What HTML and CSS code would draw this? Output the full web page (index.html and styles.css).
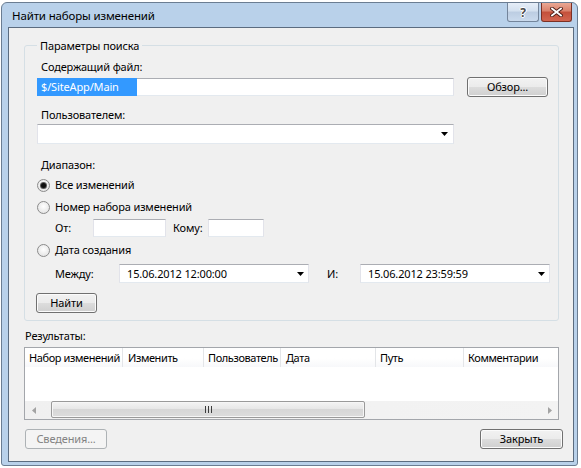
FILE: index.html
```html
<!DOCTYPE html>
<html lang="ru">
<head>
<meta charset="utf-8">
<title>Найти наборы изменений</title>
<link rel="stylesheet" href="styles.css">
</head>
<body>
<div class="window">
  <div class="titlebar">
    <span class="title">Найти наборы изменений</span>
    <div class="caption-btns">
      <div class="cbtn help">?</div>
      <div class="cbtn close">
        <svg width="13" height="10" viewBox="0 0 13 10"><path d="M2 1.5l9 7M11 1.5l-9 7" stroke="#4b1c14" stroke-width="3.6" stroke-linecap="square"/><path d="M2 1.5l9 7M11 1.5l-9 7" stroke="#fff" stroke-width="1.8" stroke-linecap="square"/></svg>
      </div>
    </div>
  </div>
  <div class="client">
    <div class="group">
      <span class="legend">Параметры поиска</span>
      <div class="lbl first">Содержащий файл:</div>
      <div class="row-file">
        <div class="tb wide"><span class="sel">$/SiteApp/Main</span></div>
        <div class="btn browse">Обзор...</div>
      </div>
      <div class="lbl user">Пользователем:</div>
      <div class="tb combo">
        <svg width="7" height="4" viewBox="0 0 7 4"><path d="M0 0h7L3.5 4z" fill="#000"/></svg>
      </div>
      <div class="lbl range">Диапазон:</div>
      <div class="radio r1"><span class="rb checked"><span class="dot"></span></span>Все изменений</div>
      <div class="radio r2"><span class="rb"></span>Номер набора изменений</div>
      <div class="sub-row from-row">
        <span class="sublbl w-from">От:</span>
        <div class="tb from-box"></div>
        <span class="sublbl w-to">Кому:</span>
        <div class="tb to-box"></div>
      </div>
      <div class="radio r3"><span class="rb"></span>Дата создания</div>
      <div class="sub-row date-row">
        <span class="sublbl w-between">Между:</span>
        <div class="tb dp"><span>15.06.2012 12:00:00</span><svg width="7" height="4" viewBox="0 0 7 4"><path d="M0 0h7L3.5 4z" fill="#000"/></svg></div>
        <span class="sublbl w-and">И:</span>
        <div class="tb dp"><span>15.06.2012 23:59:59</span><svg width="7" height="4" viewBox="0 0 7 4"><path d="M0 0h7L3.5 4z" fill="#000"/></svg></div>
      </div>
      <div class="btn find">Найти</div>
    </div>
    <div class="results-lbl">Результаты:</div>
    <div class="grid">
      <div class="grid-head">
        <div class="col c1">Набор изменений</div>
        <div class="col c2">Изменить</div>
        <div class="col c3">Пользователь</div>
        <div class="col c4">Дата</div>
        <div class="col c5">Путь</div>
        <div class="col c6">Комментарии</div>
      </div>
      <div class="grid-body"></div>
      <div class="hscroll">
        <div class="sarrow"><svg width="4" height="7" viewBox="0 0 4 7"><path d="M4 0v7L0 3.5z" fill="#a3a3a3"/></svg></div>
        <div class="track">
          <div class="thumb">
            <svg width="7" height="7" viewBox="0 0 7 7"><path d="M0.5 0v7M3.5 0v7M6.5 0v7" stroke="#3c3c3c" stroke-width="1"/></svg>
          </div>
        </div>
        <div class="sarrow"><svg width="4" height="7" viewBox="0 0 4 7"><path d="M0 0v7L4 3.5z" fill="#a3a3a3"/></svg></div>
      </div>
    </div>
    <div class="footer">
      <div class="btn disabled details">Сведения...</div>
      <div class="btn close-btn">Закрыть</div>
    </div>
  </div>
</div>
</body>
</html>
```

FILE: styles.css
```css
* { box-sizing: border-box; }
html, body { margin: 0; background: #ffffff; }
body {
  padding: 2px 0 0 1px;
  font-family: "Noto Sans", "Open Sans", sans-serif;
  font-size: 11px;
  line-height: 16px;
  letter-spacing: -0.15px;
  color: #000;
}
.window {
  width: 577px;
  height: 464px;
  background: #b9d1ea;
  border: 1px solid #6b7d92;
  border-radius: 6px 6px 3px 3px;
  display: flex;
  flex-direction: column;
}
.titlebar {
  height: 24px;
  flex: none;
  display: flex;
  justify-content: space-between;
  align-items: flex-start;
  padding: 0 5px 0 10px;
}
.title {
  font-size: 11.5px;
  line-height: 24px;
  padding-top: 1px;
}
.caption-btns { display: flex; gap: 2px; }
.cbtn {
  height: 19px;
  display: flex;
  align-items: center;
  justify-content: center;
  border-radius: 0 0 3px 3px;
}
.help {
  width: 32px;
  border: 1px solid #74859b;
  border-top: none;
  background: linear-gradient(#e6eef8, #d3e0ef 45%, #bccde2 50%, #cadaed);
  color: #4a4a4a;
  font-weight: bold;
  font-size: 12px;
  line-height: 17px;
  text-shadow: 1px 0 0 #fff, -1px 0 0 #fff, 0 1px 0 #fff, 0 -1px 0 #fff;
}
.close {
  width: 31px;
  border: 1px solid #7c3024;
  border-top: none;
  background: linear-gradient(#eaa894, #d9806a 45%, #c4503a 50%, #d26550);
}
.client {
  flex: 1;
  margin: 0 3px 3px 6px;
  border: 1px solid #5b6c80;
  background: #f0f0f0;
  display: flex;
  flex-direction: column;
}
.group {
  position: relative;
  margin: 17px 0 0 15px;
  width: 535px;
  height: 276px;
  border: 1px solid #d5dfe5;
  border-radius: 3px;
  padding-left: 12px;
  flex: none;
}
.legend {
  position: absolute;
  left: 12px;
  top: -8px;
  padding: 0 3px;
  background: #f0f0f0;
}
.lbl { height: 16px; padding-left: 4px; }
.lbl.first { margin-top: 13px; }
.lbl.user { margin-top: 10px; }
.lbl.range { margin-top: 13px; }
.tb {
  background: #fff;
  border: 1px solid;
  border-color: #abadb3 #e2e3ea #e3e9ef #e2e3ea;
}
.row-file {
  margin-top: 2px;
  height: 20px;
  display: flex;
  align-items: center;
  gap: 13px;
}
.tb.wide { width: 417px; height: 18px; display: flex; }
.sel {
  background: #3399ff;
  color: #fff;
  width: 100px;
  margin: -1px 0 -1px -1px;
  height: 18px;
  padding-left: 4px;
  line-height: 17px;
}
.btn {
  height: 20px;
  border: 1px solid #707070;
  border-radius: 3px;
  background: linear-gradient(#f2f2f2, #ebebeb 50%, #dddddd 50%, #cfcfcf);
  box-shadow: inset 0 0 0 1px #fbfbfb;
  display: flex;
  align-items: center;
  justify-content: center;
  line-height: 16px;
}
.browse { width: 81px; }
.combo {
  margin-top: 1px;
  width: 417px;
  height: 20px;
  display: flex;
  justify-content: flex-end;
  align-items: center;
  padding-right: 5px;
}
.radio {
  display: flex;
  align-items: center;
  gap: 5px;
  height: 16px;
}
.r1 { margin-top: 4px; }
.r2 { margin-top: 6px; }
.r3 { margin-top: 5px; }
.rb {
  width: 13px;
  height: 13px;
  border-radius: 50%;
  border: 1px solid #8b8b8b;
  background: radial-gradient(circle at 50% 40%, #ffffff, #e6e6e6 75%);
  display: flex;
  align-items: center;
  justify-content: center;
  flex: none;
}
.dot {
  width: 5px;
  height: 5px;
  border-radius: 50%;
  background: #111;
  box-shadow: 0 0 0 1px #5a5a5a;
}
.sub-row {
  display: flex;
  align-items: center;
  padding-left: 18px;
}
.from-row { margin-top: 4px; height: 18px; }
.date-row { margin-top: 6px; height: 19px; }
.sublbl { flex: none; }
.w-from { width: 38px; }
.w-to { width: 35px; margin-left: 7px; }
.w-between { width: 64px; }
.w-and { width: 33px; margin-left: 18px; }
.from-box { width: 73px; height: 18px; }
.to-box { width: 56px; height: 18px; }
.dp {
  width: 190px;
  height: 19px;
  display: flex;
  align-items: center;
  justify-content: space-between;
  padding: 0 4px 0 7px;
}
.find { margin-top: 10px; margin-left: -1px; width: 61px; }
.results-lbl { margin: 7px 0 0 16px; height: 16px; }
.grid {
  margin: 3px 0 0 15px;
  width: 535px;
  height: 73px;
  border: 1px solid #a3a6ab;
  background: #fff;
  display: flex;
  flex-direction: column;
  flex: none;
}
.grid-head {
  height: 19px;
  display: flex;
  background: linear-gradient(#ffffff, #ffffff 55%, #f7f8fa);
  flex: none;
}
.col {
  border-right: 1px solid #e3e5e8;
  padding-left: 4px;
  line-height: 19px;
  white-space: nowrap;
  overflow: hidden;
  letter-spacing: -0.4px;
}
.c1 { width: 98px; }
.c2 { width: 81px; padding-left: 5px; }
.c3 { width: 77px; }
.c4 { width: 95px; padding-left: 5px; }
.c5 { width: 88px; }
.c6 { flex: 1; border-right: none; }
.grid-body { flex: 1; }
.hscroll {
  height: 18px;
  flex: none;
  display: flex;
  background: linear-gradient(90deg, #f0f0f0, #f3f3f3);
}
.sarrow {
  width: 17px;
  display: flex;
  align-items: center;
  justify-content: center;
}
.track { flex: 1; display: flex; padding-left: 9px; }
.thumb {
  width: 314px;
  height: 17px;
  border: 1px solid #9a9a9a;
  border-radius: 2px;
  background: linear-gradient(#f4f4f4, #e6e6e6 50%, #d7d7d7 50%, #dcdcdc);
  box-shadow: inset 0 0 0 1px #f6f6f6;
  display: flex;
  align-items: center;
  justify-content: center;
}
.footer {
  display: flex;
  justify-content: space-between;
  margin: 9px 10px 0 16px;
}
.details { width: 82px; }
.close-btn { width: 83px; }
.btn.disabled {
  border-color: #adb2b5;
  background: #f4f4f4;
  box-shadow: none;
  color: #838383;
}
```
